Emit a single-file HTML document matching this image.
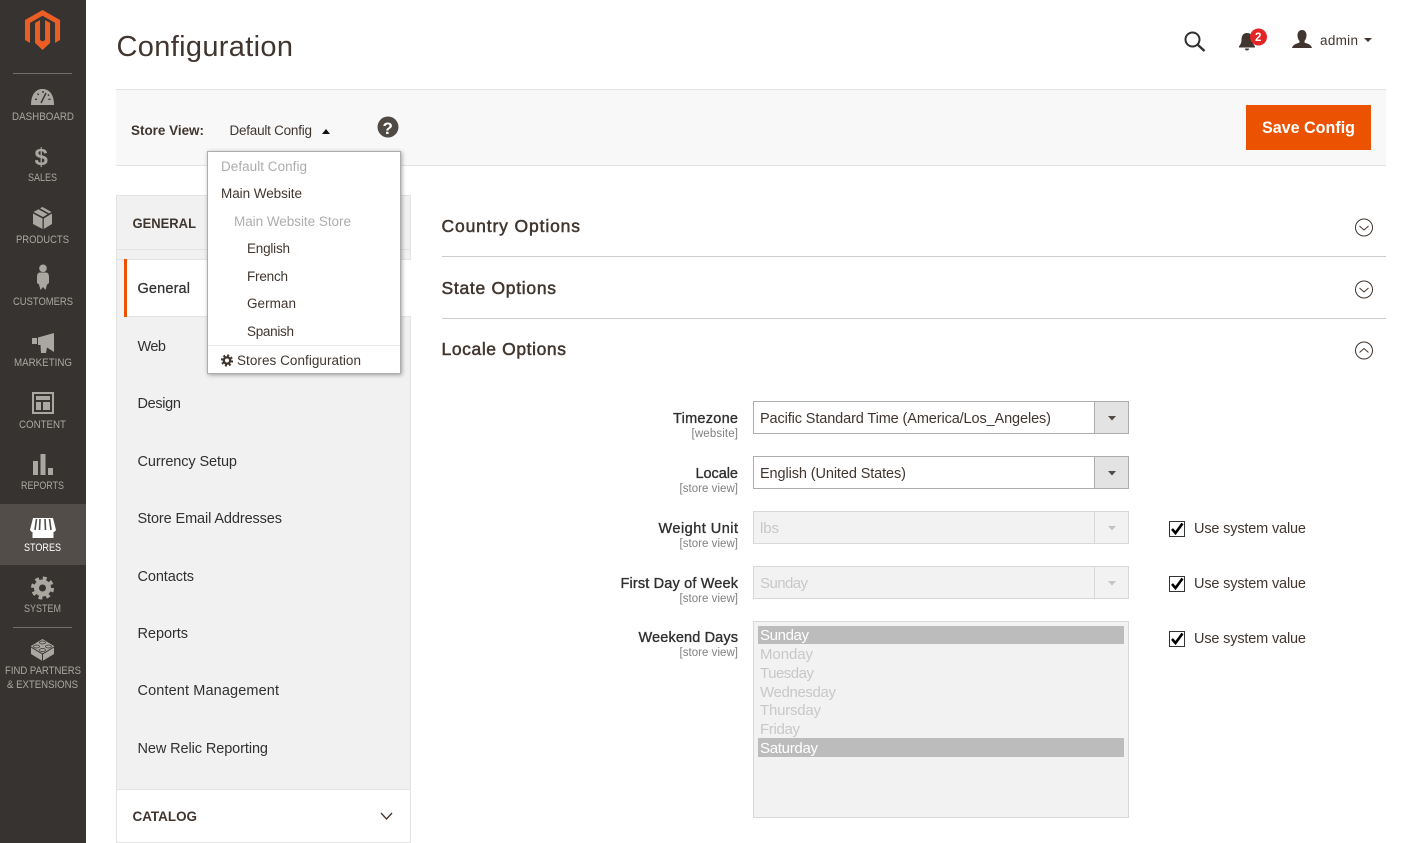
<!DOCTYPE html>
<html lang="en">
<head>
<meta charset="utf-8">
<title>Configuration</title>
<style>
html,body{margin:0;padding:0;background:#fff;width:1417px;height:843px;overflow:hidden}
svg{display:block}
text{font-family:"Liberation Sans",Arial,sans-serif;white-space:pre}
.s{font-size:11px;fill:#aaa6a0}
.n{font-size:14.5px;fill:#303030}
.d{font-size:13.5px;fill:#41362f}
.m{font-size:13.5px;fill:#adadad}
.h{font-size:14px;font-weight:700;fill:#41362f}
.a{font-size:17.5px;fill:#41362f;stroke:#41362f;stroke-width:.5px}
.l{font-size:14.5px;fill:#303030;stroke:#303030;stroke-width:.35px}
.c{font-size:11.5px;fill:#808080}
.v{font-size:14.5px;fill:#41362f}
.o{font-size:15px;fill:#c8c8c8}
.w{font-size:15px;fill:#fff}
.u{font-size:14.5px;fill:#41362f}
</style>
</head>
<body>
<svg width="1417" height="843" viewBox="0 0 1417 843" xmlns="http://www.w3.org/2000/svg">
<rect width="1417" height="843" fill="#fff"/>

<!-- sidebar -->
<rect width="86" height="843" fill="#373330"/>
<rect y="504" width="86" height="61" fill="#524d49"/>
<path transform="translate(25,10) scale(.81,.8)" fill="#eb5f24" d="M21.65 0 43.3 12.5V37.5L37.1 41.1V16.1L21.65 7.2 6.2 16.1V41.1L0 37.5V12.5ZM18.55 12.5V37.5L21.65 39.3 24.75 37.5V12.5L30.95 16.1V41.1L21.65 50 12.4 41.1V16.1Z"/>
<rect x="13" y="73" width="59" height="1" fill="#736e69"/>
<rect x="13" y="627" width="59" height="1" fill="#736e69"/>

<!-- dashboard -->
<path fill="#aaa6a0" d="M31 105C31 94 36 89 42.5 89S54 94 54 105Z"/>
<path stroke="#373330" stroke-width="1.4" fill="none" d="M41 103 46 93M35 99l2 .6M37.5 93.5l1.2 1.5M43 91v2M49 94.5l-1 1.2M50.5 99l-2 .6"/>
<!-- sales -->
<text x="34.5" y="165" font-size="24" font-weight="700" fill="#aaa6a0" textLength="16">$</text>
<!-- products -->
<path fill="#aaa6a0" d="M33 213.5 42.5 218.5V229L33 224ZM52 213.5 43.8 218.5V229L52 224ZM33.5 212 38.5 209.2 47.5 214.2 43 217ZM40 208.3 42.5 207 51.5 212 49 213.4Z"/>
<!-- customers -->
<path fill="#aaa6a0" d="M43 264.5a3.8 3.8 0 1 1-.01 0ZM39.5 272.5H46.5C48.5 273 49 275 49 277V283L47 284.5 45.5 290 43 287 40.5 290 39 284.5 37 283V277C37 275 37.5 273 39.5 272.5Z"/>
<!-- marketing -->
<path fill="#aaa6a0" d="M32 338H37V344H32ZM38 337.5 54 333V352L47 347.5 46 353H41L40.5 345H38Z"/>
<!-- content -->
<path fill="none" stroke="#aaa6a0" stroke-width="2" d="M33 393H53V413H33Z"/>
<path fill="#aaa6a0" d="M36 396H50V400H36ZM36 402H41V410H36ZM43 402H50V410H43Z"/>
<!-- reports -->
<path fill="#aaa6a0" d="M33 461H38V475H33ZM40.5 454H45.5V475H40.5ZM48 468H53V475H48Z"/>
<!-- stores -->
<path fill="#fff" d="M33 518H53L56 530C55 532 53.500 532 53.500 532V538H32.500V532C32.500 532 31 532 30 530Z"/>
<path stroke="#524d49" stroke-width="1.6" fill="none" d="M36.5 519 35 530M40 519 39.5 530M45 519 45.5 530M49.5 519 51 530"/>
<!-- system -->
<circle cx="42.5" cy="588" r="9.5" fill="none" stroke="#aaa6a0" stroke-width="4" stroke-dasharray="3.75 3.71"/>
<circle cx="42.5" cy="588" r="6" fill="none" stroke="#aaa6a0" stroke-width="5"/>
<!-- partners -->
<path fill="#aaa6a0" d="M31 646 42.5 639 54 646V654L42.5 661 31 654Z"/>
<path fill="none" stroke="#373330" stroke-width="1" d="M31 647 42.5 654 54 647M42.5 654V661"/>
<ellipse cx="42.5" cy="642.5" rx="3" ry="1.5" fill="#aaa6a0" stroke="#373330" stroke-width=".8"/>
<ellipse cx="36.5" cy="646.5" rx="3" ry="1.5" fill="#aaa6a0" stroke="#373330" stroke-width=".8"/>
<ellipse cx="48.5" cy="646.5" rx="3" ry="1.5" fill="#aaa6a0" stroke="#373330" stroke-width=".8"/>
<ellipse cx="42.5" cy="650" rx="3" ry="1.5" fill="#aaa6a0" stroke="#373330" stroke-width=".8"/>

<text class="s" x="12" y="120" textLength="62" lengthAdjust="spacingAndGlyphs">DASHBOARD</text>
<text class="s" x="28" y="181" textLength="29" lengthAdjust="spacingAndGlyphs">SALES</text>
<text class="s" x="16" y="243" textLength="53" lengthAdjust="spacingAndGlyphs">PRODUCTS</text>
<text class="s" x="13" y="305" textLength="60" lengthAdjust="spacingAndGlyphs">CUSTOMERS</text>
<text class="s" x="14" y="366" textLength="58" lengthAdjust="spacingAndGlyphs">MARKETING</text>
<text class="s" x="19" y="428" textLength="47" lengthAdjust="spacingAndGlyphs">CONTENT</text>
<text class="s" x="21" y="489" textLength="43" lengthAdjust="spacingAndGlyphs">REPORTS</text>
<text class="s" x="24" y="551" textLength="37" lengthAdjust="spacingAndGlyphs" style="fill:#fff">STORES</text>
<text class="s" x="24" y="612" textLength="37" lengthAdjust="spacingAndGlyphs">SYSTEM</text>
<text class="s" x="5" y="674" textLength="76" lengthAdjust="spacingAndGlyphs">FIND PARTNERS</text>
<text class="s" x="7" y="688" textLength="71" lengthAdjust="spacingAndGlyphs">&amp; EXTENSIONS</text>

<!-- header -->
<text x="116.5" y="56" font-size="29" fill="#41362f" textLength="176.5">Configuration</text>
<circle cx="1192.5" cy="39.5" r="7" fill="none" stroke="#303030" stroke-width="2"/>
<path d="M1198 45 1204.5 51" stroke="#303030" stroke-width="2.4" fill="none"/>
<path fill="#41362f" d="M1247 33C1251 33 1252.5 36 1252.5 40C1252.5 43 1254 45 1255 46.5V47.5H1239V46.5C1240 45 1241.5 43 1241.5 40C1241.5 36 1243 33 1247 33ZM1245 48.5H1249C1249 50 1248 50.5 1247 50.5S1245 50 1245 48.5Z"/>
<circle cx="1258.5" cy="37" r="8.5" fill="#e22626"/>
<text x="1255" y="41" font-size="11.5" font-weight="700" fill="#fff" textLength="7">2</text>
<path fill="#41362f" d="M1302 30C1305.5 30 1306.5 33 1306.5 35.5C1306.5 37.5 1305.5 40 1304.5 41V42.5C1306.5 43.5 1311 44 1312 48H1292C1293 44 1297.5 43.5 1299.5 42.5V41C1298.5 40 1297.5 37.5 1297.5 35.5C1297.5 33 1298.5 30 1302 30Z"/>
<text class="d" x="1320" y="45" textLength="38">admin</text>
<path d="M1364 38H1372L1368 42Z" fill="#41362f"/>

<!-- toolbar -->
<rect x="116" y="89.5" width="1270" height="76" fill="#f8f8f8"/>
<rect x="116" y="89" width="1270" height="1" fill="#e3e3e3"/>
<rect x="116" y="165" width="1270" height="1" fill="#e3e3e3"/>
<text x="131" y="135" font-size="14" font-weight="700" fill="#41362f" textLength="73" lengthAdjust="spacingAndGlyphs">Store View:</text>
<text class="d" x="229.5" y="135" textLength="82.5">Default Config</text>
<path d="M322 134H330L326 129Z" fill="#111"/>
<circle cx="388" cy="127" r="10.5" fill="#514943"/>
<text x="382.5" y="134" font-size="17" font-weight="700" fill="#fff" textLength="11">?</text>
<rect x="1246" y="105" width="125" height="45" fill="#eb5202"/>
<text x="1262" y="133" font-size="17" font-weight="700" fill="#fff" textLength="93" lengthAdjust="spacingAndGlyphs">Save Config</text>

<!-- left panel -->
<rect x="116.5" y="195.5" width="294" height="647" fill="#f1f1f1" stroke="#e3e3e3"/>
<rect x="117" y="249" width="293" height="1" fill="#e3e3e3"/>
<rect x="117" y="259" width="293" height="1" fill="#e3e3e3"/>
<rect x="124" y="260" width="287" height="56" fill="#fff"/>
<rect x="127" y="316" width="283" height="1" fill="#e3e3e3"/>
<rect x="410" y="316" width="1" height="474" fill="#e3e3e3"/>
<rect x="124" y="259" width="3" height="58" fill="#eb5202"/>
<rect x="116.5" y="789.5" width="294" height="53" fill="#fff" stroke="#e3e3e3"/>
<text class="h" x="132.5" y="228" textLength="63.5" lengthAdjust="spacingAndGlyphs">GENERAL</text>
<text class="n" x="137.5" y="293" textLength="52.5" style="stroke:#303030;stroke-width:.25px">General</text>
<text class="n" x="137.5" y="351" textLength="28.5">Web</text>
<text class="n" x="137.5" y="408" textLength="43.5">Design</text>
<text class="n" x="137.5" y="466" textLength="99.5">Currency Setup</text>
<text class="n" x="137.5" y="523" textLength="144.5">Store Email Addresses</text>
<text class="n" x="137.5" y="581" textLength="56.5">Contacts</text>
<text class="n" x="137.5" y="638" textLength="50.5">Reports</text>
<text class="n" x="137.5" y="695" textLength="141.5">Content Management</text>
<text class="n" x="137.5" y="753" textLength="130.5">New Relic Reporting</text>
<text class="h" x="132.5" y="821" textLength="64.5" lengthAdjust="spacingAndGlyphs">CATALOG</text>
<path d="M381 813 386.5 819 392 813" fill="none" stroke="#41362f" stroke-width="1.3"/>

<!-- store dropdown -->
<rect x="207.5" y="151.5" width="193" height="222" fill="#fff" stroke="#adadad" style="filter:drop-shadow(1px 1px 2px rgba(0,0,0,.35))"/>
<rect x="208" y="345" width="192" height="1" fill="#e8e8e8"/>
<text class="m" x="221" y="171" textLength="86">Default Config</text>
<text class="d" x="221" y="198" textLength="81">Main Website</text>
<text class="m" x="234" y="226" textLength="117">Main Website Store</text>
<text class="d" x="247" y="253" textLength="43">English</text>
<text class="d" x="247" y="281" textLength="41">French</text>
<text class="d" x="247" y="308" textLength="49">German</text>
<text class="d" x="247" y="336" textLength="47">Spanish</text>
<circle cx="227" cy="360.5" r="5" fill="none" stroke="#41362f" stroke-width="2.2" stroke-dasharray="2 1.93"/>
<circle cx="227" cy="360.5" r="3.2" fill="none" stroke="#41362f" stroke-width="2.4"/>
<text class="d" x="237" y="365" textLength="124">Stores Configuration</text>

<!-- sections -->
<text class="a" x="441.5" y="232" textLength="138.5">Country Options</text>
<text class="a" x="441.5" y="294" textLength="114.5">State Options</text>
<text class="a" x="441.5" y="355" textLength="124.5">Locale Options</text>
<rect x="442" y="256" width="944" height="1" fill="#cccccc"/>
<rect x="442" y="318" width="944" height="1" fill="#cccccc"/>
<g fill="none" stroke="#41362f" stroke-width="1">
<circle cx="1364" cy="227.5" r="8.5"/><path d="M1359.5 226 1364 230 1368.5 226"/>
<circle cx="1364" cy="289.5" r="8.5"/><path d="M1359.5 288 1364 292 1368.5 288"/>
<circle cx="1364" cy="350.5" r="8.5"/><path d="M1359.5 352.5 1364 348.5 1368.5 352.5"/>
</g>

<!-- form labels -->
<text class="l" x="673" y="423" textLength="65">Timezone</text>
<text class="c" x="691.5" y="437" textLength="46.5">[website]</text>
<text class="l" x="695.5" y="478" textLength="42.5">Locale</text>
<text class="c" x="679.5" y="492" textLength="58.5">[store view]</text>
<text class="l" x="658.5" y="533" textLength="79.5">Weight Unit</text>
<text class="c" x="679.5" y="547" textLength="58.5">[store view]</text>
<text class="l" x="620.5" y="588" textLength="117.5">First Day of Week</text>
<text class="c" x="679.5" y="602" textLength="58.5">[store view]</text>
<text class="l" x="638.5" y="642" textLength="99.5">Weekend Days</text>
<text class="c" x="679.5" y="656" textLength="58.5">[store view]</text>

<!-- selects -->
<rect x="753.5" y="401.5" width="375" height="32" fill="#fff" stroke="#adadad"/>
<rect x="1095" y="402" width="33" height="31" fill="#e3e3e3"/>
<rect x="1094" y="402" width="1" height="31" fill="#adadad"/>
<path d="M1108 416H1116L1112 420.5Z" fill="#514943"/>
<text class="v" x="760" y="423" textLength="291">Pacific Standard Time (America/Los_Angeles)</text>

<rect x="753.5" y="456.5" width="375" height="32" fill="#fff" stroke="#adadad"/>
<rect x="1095" y="457" width="33" height="31" fill="#e3e3e3"/>
<rect x="1094" y="457" width="1" height="31" fill="#adadad"/>
<path d="M1108 471H1116L1112 475.5Z" fill="#514943"/>
<text class="v" x="760" y="478" textLength="146">English (United States)</text>

<rect x="753.5" y="511.5" width="375" height="32" fill="#f2f2f2" stroke="#d8d8d8"/>
<rect x="1094" y="512" width="1" height="31" fill="#d8d8d8"/>
<path d="M1108 526H1116L1112 530.5Z" fill="#c4c4c4"/>
<text class="o" x="760" y="533" textLength="19">lbs</text>

<rect x="753.5" y="566.5" width="375" height="32" fill="#f2f2f2" stroke="#d8d8d8"/>
<rect x="1094" y="567" width="1" height="31" fill="#d8d8d8"/>
<path d="M1108 581H1116L1112 585.5Z" fill="#c4c4c4"/>
<text class="o" x="760" y="588" textLength="48">Sunday</text>

<!-- multiselect -->
<rect x="753.5" y="621.5" width="375" height="196" fill="#f2f2f2" stroke="#d8d8d8"/>
<rect x="758" y="626" width="366" height="18" fill="#bcbcbc"/>
<rect x="758" y="738" width="366" height="19" fill="#bcbcbc"/>
<text class="w" x="760" y="640" textLength="49">Sunday</text>
<text class="o" x="760" y="659" textLength="53">Monday</text>
<text class="o" x="760" y="678" textLength="54">Tuesday</text>
<text class="o" x="760" y="697" textLength="76">Wednesday</text>
<text class="o" x="760" y="715" textLength="61">Thursday</text>
<text class="o" x="760" y="734" textLength="40">Friday</text>
<text class="w" x="760" y="753" textLength="58">Saturday</text>

<!-- checkboxes -->
<g>
<rect x="1169.5" y="521.5" width="15" height="15" fill="#fff" stroke="#333"/>
<path d="M1172 529 1175.5 533 1182.5 523.5" fill="none" stroke="#000" stroke-width="2.6"/>
<rect x="1169.5" y="576.5" width="15" height="15" fill="#fff" stroke="#333"/>
<path d="M1172 584 1175.5 588 1182.5 578.5" fill="none" stroke="#000" stroke-width="2.6"/>
<rect x="1169.5" y="631.5" width="15" height="15" fill="#fff" stroke="#333"/>
<path d="M1172 639 1175.5 643 1182.5 633.5" fill="none" stroke="#000" stroke-width="2.6"/>
</g>
<text class="u" x="1194" y="533" textLength="112">Use system value</text>
<text class="u" x="1194" y="588" textLength="112">Use system value</text>
<text class="u" x="1194" y="643" textLength="112">Use system value</text>
</svg>
</body>
</html>
